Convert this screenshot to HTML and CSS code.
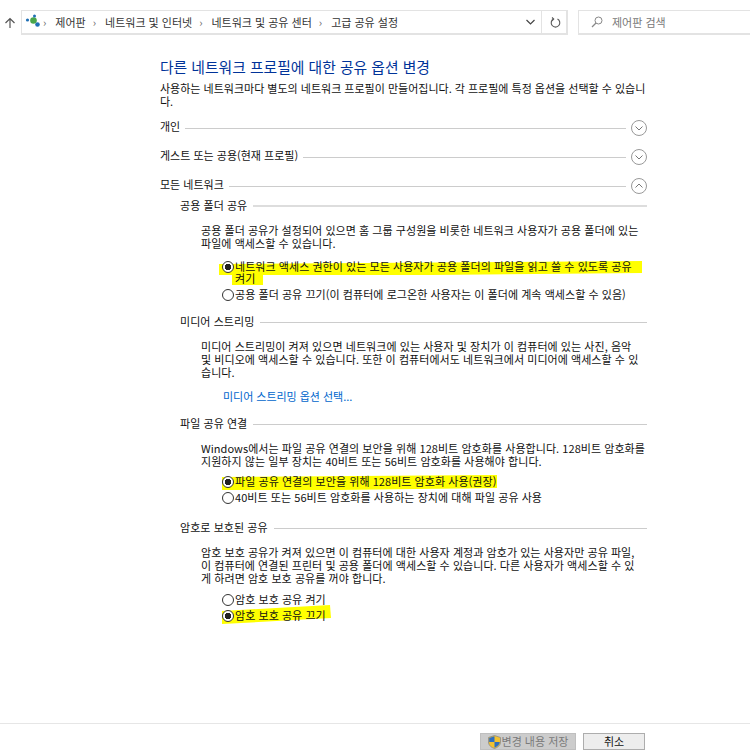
FILE: index.html
```html
<!DOCTYPE html>
<html lang="ko">
  <head>
    <meta charset="UTF-8">
    <title>고급 공유 설정</title>
    <link rel="stylesheet" href="styles.css">
  </head>
  <body>
    <!-- yellow marker strokes, they sit under the text -->
    <svg class="marker" width="750" height="756">
      <polygon points="219,264 642,261 642,273 430,275 263,275 263,285 232,285 232,275 219,275"/>
      <polygon points="222,477 497,475 497,488 340,490 222,490"/>
      <polygon points="222,611 330,605 331,618 222,624"/>
    </svg>

    <div class="toolbar">
      <svg class="up" width="12" height="12" viewBox="0 0 12 12"><path d="M6 11V1.500M1.500 6 6 1.500 10.500 6" fill="none" stroke="#555" stroke-width="1.200"/></svg>
      <div class="address">
        <svg class="net-icon" width="15" height="14" viewBox="0 0 15 14">
          <circle cx="2.500" cy="6" r="1.600" fill="#1f6fb5"/>
          <circle cx="8.500" cy="6.500" r="3.300" fill="#4aa64a"/>
          <circle cx="9.500" cy="2" r="1.500" fill="#1f6fb5"/>
          <circle cx="12.500" cy="10.500" r="2.300" fill="#1f6fb5"/>
        </svg>
        <span class="crumb">제어판</span>
        <span class="crumb">네트워크 및 인터넷</span>
        <span class="crumb">네트워크 및 공유 센터</span>
        <span class="crumb">고급 공유 설정</span>
        <svg class="drop" width="9" height="6" viewBox="0 0 9 6"><path d="M.5 1 4.500 5 8.500 1" fill="none" stroke="#444" stroke-width="1.200"/></svg>
        <div class="refresh">
          <svg width="11" height="12" viewBox="0 0 11 12"><path d="M3.500 3A4.300 4.300 0 1 0 7.500 3M2 1.500 3.700 3 2 4.800" fill="none" stroke="#555" stroke-width="1.100"/></svg>
        </div>
      </div>
      <div class="search">
        <svg width="12" height="12" viewBox="0 0 12 12"><circle cx="7.500" cy="4.500" r="3.500" fill="none" stroke="#888"/><path d="M5 7 1 11" stroke="#888" stroke-width="1.200"/></svg>
        <span>제어판 검색</span>
      </div>
    </div>

    <div class="content">
      <h1>다른 네트워크 프로필에 대한 공유 옵션 변경</h1>
      <p class="intro">사용하는 네트워크마다 별도의 네트워크 프로필이 만들어집니다. 각 프로필에 특정 옵션을 선택할 수 있습니<br>다.</p>

      <div class="profile first">
        <span>개인</span><i></i>
        <svg class="toggle" width="16" height="16" viewBox="0 0 16 16"><circle cx="8" cy="8" r="7.500"/><path d="M4.500 6.500 8 10l3.500-3.500"/></svg>
      </div>
      <div class="profile second">
        <span>게스트 또는 공용(현재 프로필)</span><i></i>
        <svg class="toggle" width="16" height="16" viewBox="0 0 16 16"><circle cx="8" cy="8" r="7.500"/><path d="M4.500 6.500 8 10l3.500-3.500"/></svg>
      </div>
      <div class="profile third">
        <span>모든 네트워크</span><i></i>
        <svg class="toggle" width="16" height="16" viewBox="0 0 16 16"><circle cx="8" cy="8" r="7.500"/><path d="M4.500 9.500 8 6l3.500 3.500"/></svg>
      </div>

      <div class="group">
        <div class="group-head thick"><span>공용 폴더 공유</span><i></i></div>
        <p class="desc">공용 폴더 공유가 설정되어 있으면 홈 그룹 구성원을 비롯한 네트워크 사용자가 공용 폴더에 있는<br>파일에 액세스할 수 있습니다.</p>
        <div class="options o1">
          <label class="option wrapped"><b class="radio on"></b><span>네트워크 액세스 권한이 있는 모든 사용자가 공용 폴더의 파일을 읽고 쓸 수 있도록 공유<br>켜기</span></label>
          <label class="option gap16"><b class="radio"></b><span>공용 폴더 공유 끄기(이 컴퓨터에 로그온한 사용자는 이 폴더에 계속 액세스할 수 있음)</span></label>
        </div>
      </div>

      <div class="group g2">
        <div class="group-head"><span>미디어 스트리밍</span><i></i></div>
        <p class="desc">미디어 스트리밍이 켜져 있으면 네트워크에 있는 사용자 및 장치가 이 컴퓨터에 있는 사진, 음악<br>및 비디오에 액세스할 수 있습니다. 또한 이 컴퓨터에서도 네트워크에서 미디어에 액세스할 수 있<br>습니다.</p>
        <a class="link" href="#">미디어 스트리밍 옵션 선택...</a>
      </div>

      <div class="group g3">
        <div class="group-head"><span>파일 공유 연결</span><i></i></div>
        <p class="desc">Windows에서는 파일 공유 연결의 보안을 위해 128비트 암호화를 사용합니다. 128비트 암호화를<br>지원하지 않는 일부 장치는 40비트 또는 56비트 암호화를 사용해야 합니다.</p>
        <div class="options o3">
          <label class="option"><b class="radio on"></b><span>파일 공유 연결의 보안을 위해 128비트 암호화 사용(권장)</span></label>
          <label class="option"><b class="radio"></b><span>40비트 또는 56비트 암호화를 사용하는 장치에 대해 파일 공유 사용</span></label>
        </div>
      </div>

      <div class="group g4">
        <div class="group-head"><span>암호로 보호된 공유</span><i></i></div>
        <p class="desc">암호 보호 공유가 켜져 있으면 이 컴퓨터에 대한 사용자 계정과 암호가 있는 사용자만 공유 파일,<br>이 컴퓨터에 연결된 프린터 및 공용 폴더에 액세스할 수 있습니다. 다른 사용자가 액세스할 수 있<br>게 하려면 암호 보호 공유를 꺼야 합니다.</p>
        <div class="options o4">
          <label class="option"><b class="radio"></b><span>암호 보호 공유 켜기</span></label>
          <label class="option"><b class="radio on"></b><span>암호 보호 공유 끄기</span></label>
        </div>
      </div>
    </div>

    <div class="footer">
      <button class="btn disabled">
        <svg width="13" height="14" viewBox="0 0 13 14">
          <path d="M6.500 .5 12.500 2.500V7C12.500 10.500 9.500 12.500 6.500 13.500 3.500 12.500 .5 10.500 .5 7V2.500Z" fill="#f2c230" stroke="#8a8a8a" stroke-width=".8"/>
          <path d="M6.500 1.200V7H1.200V3ZM6.500 7H11.800C11.600 9.800 9 11.800 6.500 12.800Z" fill="#2f6fc0"/>
        </svg>
        변경 내용 저장
      </button>
      <button class="btn cancel">취소</button>
    </div>
  </body>
</html>
```

FILE: styles.css
```css
html { height: 100%; }
body {
  margin: 0;
  height: 756px;
  display: flex;
  flex-direction: column;
  overflow: hidden;
  background: white;
  color: #111;
  font-family: "Noto Sans CJK KR", "Noto Sans", sans-serif;
  font-size: 11px;
  line-height: 13px;
  white-space: nowrap;
}
.marker {
  position: absolute;
  left: 0;
  top: 0;
  z-index: -1;
}
.marker polygon { fill: #ffff00; }

.toolbar {
  display: flex;
  align-items: center;
  height: 25px;
  margin-top: 10px;
  padding-left: 4px;
}
.up { margin-right: 5px; }
.address {
  box-sizing: border-box;
  width: 547px;
  height: 25px;
  display: flex;
  align-items: center;
  border: 1px solid #e3e3e3;
  border-width: 1px 2px 2px 1px;
  padding-left: 1px;
  color: #333;
}
.net-icon { margin: 0 -4px 3px 2px; }
.crumb::before {
  content: "›";
  color: #666;
  margin: 0 9px 0 7px;
}
.drop { margin-left: auto; margin-right: 6px; }
.refresh {
  box-sizing: border-box;
  width: 25px;
  height: 100%;
  padding-left: 2px;
  display: flex;
  align-items: center;
  justify-content: center;
  border-left: 1px solid #e3e3e3;
}
.search {
  box-sizing: border-box;
  flex: 1;
  height: 25px;
  margin-left: 10px;
  display: flex;
  align-items: center;
  gap: 9px;
  padding-left: 12px;
  border-top: 1px solid #e3e3e3;
  border-left: 1px solid #e3e3e3;
  border-bottom: 2px solid #e3e3e3;
  color: #777;
}

.content {
  flex: 1;
  padding-left: 160px;
  width: 487px;
}
h1 {
  margin: 22px 0 0;
  font-size: 14.800px;
  line-height: 20px;
  font-weight: normal;
  color: #003399;
}
.intro { margin: 5px 0 0; }

.profile {
  display: flex;
  align-items: center;
  height: 16px;
}
.profile span { margin-bottom: 4px; }
.profile i, .group-head i {
  flex: 1;
  height: 1px;
  background: #cccccc;
  margin-left: 5px;
}
.profile.first { margin-top: 12px; }
.profile.second { margin-top: 13px; }
.profile.third { margin-top: 13px; }
.toggle { margin-left: 5px; }
.toggle circle { fill: none; stroke: #999; }
.toggle path { fill: none; stroke: #777; }

.group { margin-left: 20px; letter-spacing: .05px; }
.group-head {
  display: flex;
  align-items: center;
  height: 14px;
  margin-top: 5px;
}
.group-head span { margin-bottom: 2px; }
.group-head i { margin-left: 6px; }
.group-head.thick i { height: 2px; background: #dddddd; }
.desc { margin: 11px 0 0 21px; }
.g2 { margin-top: 11px; }
.g3 { margin-top: 14px; }
.g4 { margin-top: 14px; }
.link {
  display: block;
  margin: 11px 0 0 43px;
  color: #0066cc;
  text-decoration: none;
  letter-spacing: -.03px;
}

.options { margin-left: 42px; }
.o1 { margin-top: 10px; }
.o3 { margin-top: 7px; }
.o4 { margin-top: 8px; }
.option { display: flex; height: 16px; }
.option.wrapped { height: auto; line-height: 12px; }
.gap16 { margin-top: 4px; }
.radio {
  box-sizing: border-box;
  flex: none;
  width: 12px;
  height: 12px;
  margin: 1px 1px 0 0;
  border: 1px solid #333;
  border-radius: 50%;
  background: white;
}
.radio.on { background: radial-gradient(circle, #222 0 3px, white 3.500px); }

.footer {
  box-sizing: border-box;
  height: 33px;
  border-top: 1px solid #e6e6e6;
  display: flex;
  justify-content: flex-end;
  align-items: flex-start;
  gap: 7px;
  padding: 9px 105px 0 0;
}
.btn {
  box-sizing: border-box;
  height: 17px;
  font: inherit;
  color: #111;
  background: #ededed;
  border: 1px solid #adadad;
  padding: 0;
  display: flex;
  align-items: center;
  justify-content: center;
}
.btn.disabled {
  width: 96px;
  gap: 1px;
  background: #cccccc;
  border-color: #bfbfbf;
  color: #7a7a7a;
}
.btn.cancel { width: 62px; }
```
